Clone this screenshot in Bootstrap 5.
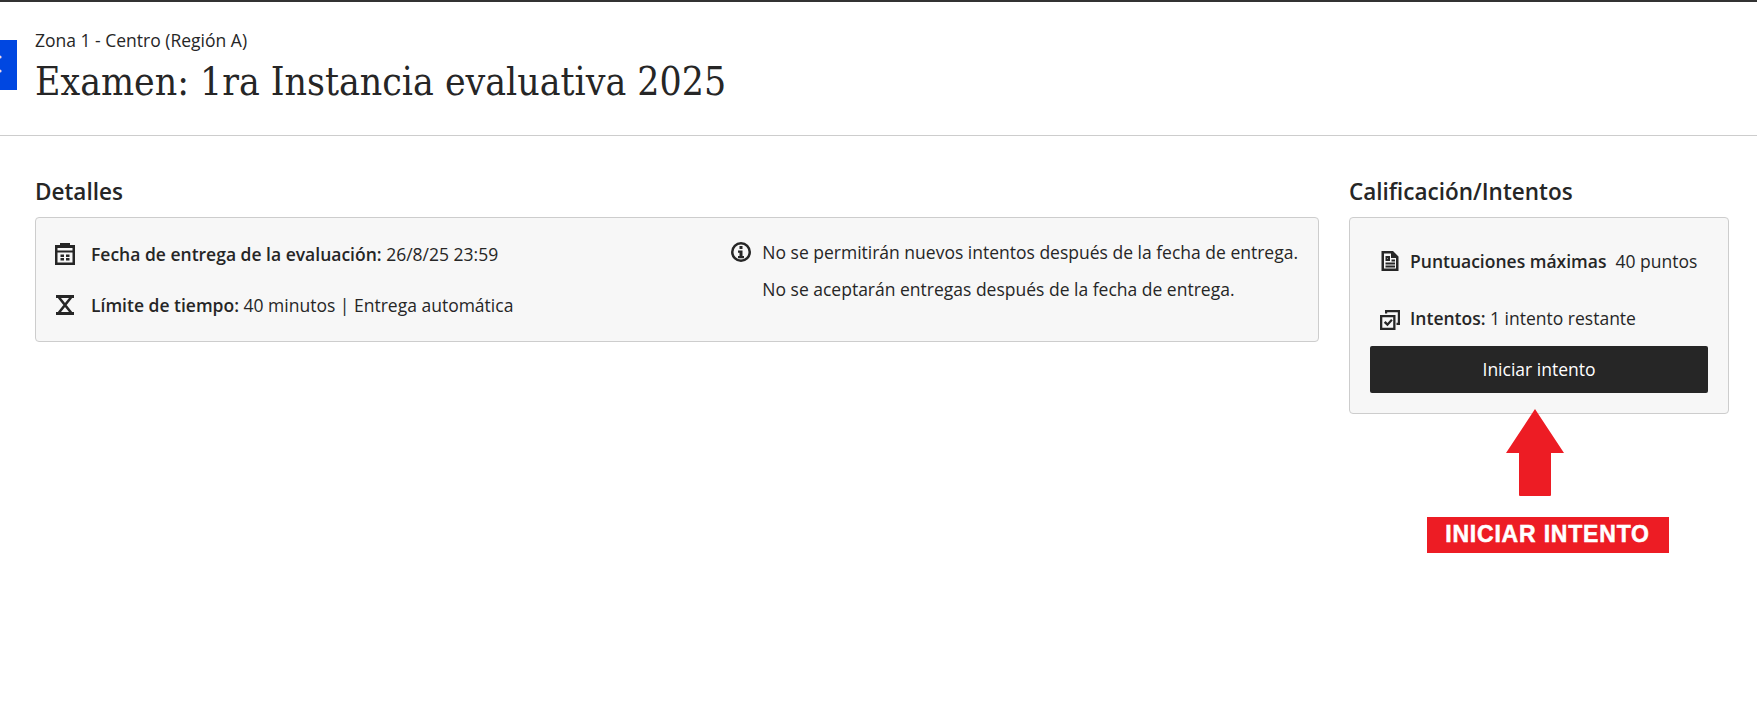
<!DOCTYPE html>
<html lang="es">
<head>
  <meta charset="UTF-8">
  <title>Examen: 1ra Instancia evaluativa 2025</title>
  <meta name="viewport" content="width=device-width, initial-scale=1">
  <link href="https://cdn.jsdelivr.net/npm/bootstrap@5.3.3/dist/css/bootstrap.min.css" rel="stylesheet">
  <style>
    body { font-family: "Open Sans", sans-serif; font-size: 17.5px; color: #262626; background: #fff; border-top: 2px solid #333; height: 703px; overflow: hidden; }
    .exam-head { height: 134px; padding: 26px 35px 0; border-bottom: 1px solid #cdcdcd; }
    .back-tab { width: 17px; height: 50px; margin-top: 40px; background: #0047e1; }
    .back-tab svg { display: block; }
    .zone-name { line-height: 24px; margin-bottom: 6px; }
    .exam-title { font-family: "DejaVu Serif Condensed", "DejaVu Serif", serif; font-size: 38.8px; font-weight: 400; line-height: 48px; margin: 0; }
    .exam-body { padding: 41px 28px 0 35px; gap: 30px; }
    .col-main { width: 1284px; }
    .col-side { width: 380px; }
    .sec-title { font-size: 22.5px; font-weight: 600; line-height: 30px; margin: 0 0 10px; }
    .info-panel { background: #f7f7f7; border: 1px solid #cdcdcd; border-radius: 4px; }
    .panel-details { height: 125px; padding: 22px 20px 0 17px; }
    .panel-grade { height: 197px; padding: 31px 20px 0; }
    .detail-lines { padding-top: 2px; }
    .detail-gap { margin-bottom: 27px; }
    .grade-gap { margin-bottom: 31px; }
    .tries-gap { margin-bottom: 14px; }
    .info-line { line-height: 24px; }
    .info-line b { font-weight: 600; }
    .line-gap { gap: 14px; }
    .note-gap { gap: 9px; }
    .ico { width: 24px; height: 24px; flex: none; color: #262626; }
    .ico-low { margin-top: 4px; }
    .note-text { line-height: 24px; margin: 0 0 13px; }
    .btn-start { background: #262626; color: #fff; border: 0; border-radius: 2px; height: 47px; font-size: 17.5px; }
    .btn-start:hover { background: #262626; color: #fff; }
    .callout { margin-top: -5px; }
    .callout-arrow { margin-right: 8px; }
    .callout-tag { width: 242px; height: 36px; margin: 20px 0 0 17px; background: #ed1c24; color: #fff; font-family: "Liberation Sans", sans-serif; font-weight: 700; font-size: 23px; line-height: 34px; text-align: center; letter-spacing: .8px; -webkit-text-stroke: .5px #fff; }
  </style>
</head>
<body>
  <div class="back-tab position-absolute top-0 start-0">
    <svg width="17" height="50" viewBox="0 0 17 50" fill="#f3d9e6"><circle cx="0" cy="17" r="1.600"/><circle cx="0" cy="31" r="1.600"/></svg>
  </div>
  <header class="exam-head">
    <div class="zone-name">Zona 1 - Centro (Región A)</div>
    <h1 class="exam-title">Examen: 1ra Instancia evaluativa 2025</h1>
  </header>
  <main class="exam-body d-flex">
    <section class="col-main">
      <h2 class="sec-title">Detalles</h2>
      <div class="info-panel panel-details d-flex justify-content-between">
        <div class="detail-lines">
          <div class="info-line d-flex align-items-center line-gap detail-gap">
            <svg class="ico" viewBox="0 0 24 24" fill="currentColor"><path fill-rule="evenodd" d="M7 1h10v2h5v20H2V3h5zM4.500 6v2.500h15V6zm0 4.500v10h15v-10zM7.500 12.500h3.500v2.500H7.500zm5.500 0h3.500v2.500H13zm-5.500 3.500h3.500v2.500H7.500zm5.500 0h3.500v2.500H13z"/></svg>
            <span><b>Fecha de entrega de la evaluación:</b> 26/8/25 23:59</span>
          </div>
          <div class="info-line d-flex align-items-center line-gap">
            <svg class="ico" viewBox="0 0 24 24" fill="none" stroke="currentColor"><path stroke-width="3" d="M3 3.500h18M3 20.500h18"/><path stroke-width="2.600" d="M6 4.500 18 19.500M18 4.500 6 19.500"/></svg>
            <span><b>Límite de tiempo:</b> 40 minutos | Entrega automática</span>
          </div>
        </div>
        <div class="d-flex note-gap">
          <svg class="ico" viewBox="0 0 24 24" fill="currentColor"><path fill-rule="evenodd" d="M12 2a10 10 0 1 1 0 20 10 10 0 0 1 0-20zm0 2.500a7.500 7.500 0 1 0 0 15 7.500 7.500 0 0 0 0-15zM10.500 6h3v3h-3zM9 10.500h4.500v5.500H15v2.300H9V16h1.500v-3.200H9z"/></svg>
          <div>
            <p class="note-text">No se permitirán nuevos intentos después de la fecha de entrega.</p>
            <p class="note-text">No se aceptarán entregas después de la fecha de entrega.</p>
          </div>
        </div>
      </div>
    </section>
    <section class="col-side">
      <h2 class="sec-title">Calificación/Intentos</h2>
      <div class="info-panel panel-grade">
        <div class="info-line d-flex align-items-center gap-2 ps-2 grade-gap">
          <svg class="ico" viewBox="0 0 24 24" fill="currentColor"><path fill-rule="evenodd" d="M3.500 2H15l5.500 5.500V22H3.500zM6 4.500v15h12V9h-5V4.500zM7.500 7H12v5H7.500zm2 2v1h.5V9zM13.500 10.500H17v2h-3.500zM7.500 13.500H17v2H7.500zm0 3H17v2H7.500z"/></svg>
          <span><b>Puntuaciones máximas</b>&nbsp; 40 puntos</span>
        </div>
        <div class="info-line d-flex align-items-center gap-2 ps-2 tries-gap">
          <svg class="ico ico-low" viewBox="0 0 24 24" fill="currentColor"><path fill-rule="evenodd" d="M7 2h15v15h-3.500v-2.200h1.300V4.200H9.200v1.300H7zM2 7h15.500v15H2zm2.300 2.300v10.400h10.900V9.300zm1.500 5.400L7.500 13l2 2 3.600-4 1.600 1.500-5.200 5.800z"/></svg>
          <span><b>Intentos:</b> 1 intento restante</span>
        </div>
        <button type="button" class="btn btn-start w-100">Iniciar intento</button>
      </div>
      <div class="callout d-flex flex-column align-items-center">
        <svg class="callout-arrow" width="58" height="88" viewBox="0 0 58 88"><path fill="#ed1c24" d="M29 0 58 44H45V86a1 1 0 0 1-1 1H14a1 1 0 0 1-1-1V44H0z"/></svg>
        <div class="callout-tag">INICIAR INTENTO</div>
      </div>
    </section>
  </main>
  <script src="https://cdn.jsdelivr.net/npm/bootstrap@5.3.3/dist/js/bootstrap.bundle.min.js"></script>
</body>
</html>
